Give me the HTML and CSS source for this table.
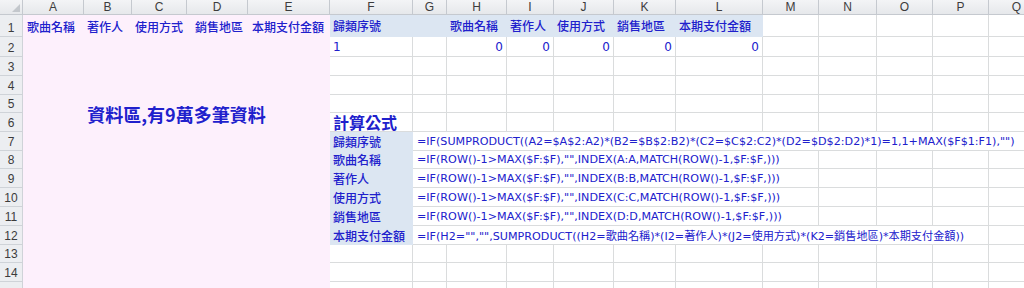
FILE: index.html
```html
<!DOCTYPE html>
<html>
<head>
    <meta charset="utf-8">
    <link rel="stylesheet" href="styles.css">
</head>
<body>
<div class="sheet">
    <!-- data block A:E, no gridlines inside -->
    <div class="data-area"></div>
    <div class="lbl col-a">歌曲名稱</div>
    <div class="lbl col-b">著作人</div>
    <div class="lbl col-c">使用方式</div>
    <div class="lbl col-d">銷售地區</div>
    <div class="lbl col-e">本期支付金額</div>
    <div class="big-note">資料區,有9萬多筆資料</div>

    <!-- column headers -->
    <div class="corner"><span class="tri"></span></div>
    <div class="ch">A</div><div class="ch">B</div><div class="ch">C</div><div class="ch">D</div>
    <div class="ch">E</div><div class="ch">F</div><div class="ch">G</div><div class="ch">H</div>
    <div class="ch">I</div><div class="ch">J</div><div class="ch">K</div><div class="ch">L</div>
    <div class="ch">M</div><div class="ch">N</div><div class="ch">O</div><div class="ch">P</div>
    <div class="ch">Q</div>

    <!-- row 1 -->
    <div class="rh">1</div>
    <div class="c blue bold">歸類序號</div>
    <div class="c blue"></div>
    <div class="c blue bold">歌曲名稱</div>
    <div class="c blue bold">著作人</div>
    <div class="c blue bold">使用方式</div>
    <div class="c blue bold">銷售地區</div>
    <div class="c blue bold">本期支付金額</div>
    <div class="c"></div><div class="c"></div><div class="c"></div><div class="c"></div><div class="c"></div>

    <!-- row 2 -->
    <div class="rh">2</div>
    <div class="c val">1</div>
    <div class="c"></div>
    <div class="c val num">0</div>
    <div class="c val num">0</div>
    <div class="c val num">0</div>
    <div class="c val num">0</div>
    <div class="c val num">0</div>
    <div class="c"></div><div class="c"></div><div class="c"></div><div class="c"></div><div class="c"></div>

    <!-- rows 3-5 -->
    <div class="rh">3</div>
    <div class="c"></div><div class="c"></div><div class="c"></div><div class="c"></div><div class="c"></div><div class="c"></div>
    <div class="c"></div><div class="c"></div><div class="c"></div><div class="c"></div><div class="c"></div><div class="c"></div>
    <div class="rh">4</div>
    <div class="c"></div><div class="c"></div><div class="c"></div><div class="c"></div><div class="c"></div><div class="c"></div>
    <div class="c"></div><div class="c"></div><div class="c"></div><div class="c"></div><div class="c"></div><div class="c"></div>
    <div class="rh">5</div>
    <div class="c"></div><div class="c"></div><div class="c"></div><div class="c"></div><div class="c"></div><div class="c"></div>
    <div class="c"></div><div class="c"></div><div class="c"></div><div class="c"></div><div class="c"></div><div class="c"></div>

    <!-- row 6 -->
    <div class="rh">6</div>
    <div class="c title">計算公式</div>
    <div class="c"></div><div class="c"></div><div class="c"></div><div class="c"></div><div class="c"></div><div class="c"></div>
    <div class="c"></div><div class="c"></div><div class="c"></div><div class="c"></div><div class="c"></div>

    <!-- formulas -->
    <div class="rh">7</div>
    <div class="c blue bold">歸類序號</div>
    <div class="c formula span-11">=IF(SUMPRODUCT((A2=$A$2:A2)*(B2=$B$2:B2)*(C2=$C$2:C2)*(D2=$D$2:D2)*1)=1,1+MAX($F$1:F1),"")</div>

    <div class="rh">8</div>
    <div class="c blue bold">歌曲名稱</div>
    <div class="c formula span-7">=IF(ROW()-1&gt;MAX($F:$F),"",INDEX(A:A,MATCH(ROW()-1,$F:$F,)))</div>
    <div class="c"></div><div class="c"></div><div class="c"></div><div class="c"></div>

    <div class="rh">9</div>
    <div class="c blue bold">著作人</div>
    <div class="c formula span-7">=IF(ROW()-1&gt;MAX($F:$F),"",INDEX(B:B,MATCH(ROW()-1,$F:$F,)))</div>
    <div class="c"></div><div class="c"></div><div class="c"></div><div class="c"></div>

    <div class="rh">10</div>
    <div class="c blue bold">使用方式</div>
    <div class="c formula span-7">=IF(ROW()-1&gt;MAX($F:$F),"",INDEX(C:C,MATCH(ROW()-1,$F:$F,)))</div>
    <div class="c"></div><div class="c"></div><div class="c"></div><div class="c"></div>

    <div class="rh">11</div>
    <div class="c blue bold">銷售地區</div>
    <div class="c formula span-7">=IF(ROW()-1&gt;MAX($F:$F),"",INDEX(D:D,MATCH(ROW()-1,$F:$F,)))</div>
    <div class="c"></div><div class="c"></div><div class="c"></div><div class="c"></div>

    <div class="rh">12</div>
    <div class="c blue bold">本期支付金額</div>
    <div class="c formula span-10">=IF(H2="","",SUMPRODUCT((H2=歌曲名稱)*(I2=著作人)*(J2=使用方式)*(K2=銷售地區)*本期支付金額))</div>
    <div class="c"></div>

    <!-- rows 13-15 -->
    <div class="rh">13</div>
    <div class="c"></div><div class="c"></div><div class="c"></div><div class="c"></div><div class="c"></div><div class="c"></div>
    <div class="c"></div><div class="c"></div><div class="c"></div><div class="c"></div><div class="c"></div><div class="c"></div>
    <div class="rh">14</div>
    <div class="c"></div><div class="c"></div><div class="c"></div><div class="c"></div><div class="c"></div><div class="c"></div>
    <div class="c"></div><div class="c"></div><div class="c"></div><div class="c"></div><div class="c"></div><div class="c"></div>
    <div class="rh"></div>
    <div class="c"></div><div class="c"></div><div class="c"></div><div class="c"></div><div class="c"></div><div class="c"></div>
    <div class="c"></div><div class="c"></div><div class="c"></div><div class="c"></div><div class="c"></div><div class="c"></div>
</div>
</body>
</html>
```

FILE: styles.css
```css
:root {
    --grid-line: #dadcdd;
    --head-line: #c5c9cf;
    --ink: #2020cc;
    --fill-blue: #dce6f2;
    --fill-pink: #fdf0fc;
}

body {
    margin: 0;
    overflow: hidden;
    background: #fff;
    font-family: "DejaVu Sans", "Noto Sans CJK TC", sans-serif;
}

.sheet {
    display: grid;
    grid-template-columns: 23px 61px 48px 55px 61px 82px 83px 34px 60px 47px 60px 62px 87px 56px 58px 56px 56px 56px;
    grid-template-rows: 15px 22px 20px 19px 19px 18px 19px 19px 18px 19px 19px 19px 19px 18px 19px 19px;
    width: 1045px;
}

/* headers */
.corner,
.ch,
.rh {
    background: linear-gradient(#f3f4f6, #e6e8eb);
    border-right: 1px solid var(--head-line);
    border-bottom: 1px solid var(--head-line);
    color: #3c3c3c;
    font-family: "Liberation Sans", Arial, sans-serif;
    font-size: 12px;
    display: flex;
    align-items: center;
    justify-content: center;
}

.corner {
    justify-content: flex-end;
    align-items: flex-end;
    padding: 0 2px 2px 0;
}

.tri {
    width: 0;
    height: 0;
    border-left: 8px solid transparent;
    border-bottom: 8px solid #c3c7cc;
}

.rh {
    background: #eceef1;
    border-color: #cfd3d8;
    align-items: flex-end;
    padding-bottom: 1px;
}

/* cells */
.c {
    border-right: 1px solid var(--grid-line);
    border-bottom: 1px solid var(--grid-line);
    display: flex;
    align-items: center;
    padding: 0 3px;
    white-space: nowrap;
    color: var(--ink);
    font-size: 12px;
    min-width: 0;
}

.blue {
    background: var(--fill-blue);
    border-color: transparent;
}

.bold {
    font-family: "Noto Sans CJK TC", sans-serif;
    font-weight: 500;
    font-size: 12px;
}

.val {
    font-family: "DejaVu Sans", sans-serif;
    font-size: 12px;
}

.num {
    justify-content: flex-end;
}

.title {
    font-family: "Noto Sans CJK TC", sans-serif;
    font-weight: 700;
    font-size: 16px;
}

.formula {
    font-size: 11.15px;
    padding-left: 4px;
}

.span-7 { grid-column: span 7; }
.span-10 { grid-column: span 10; }
.span-11 { grid-column: span 11; }

/* data block */
.data-area {
    grid-column: 2 / 7;
    grid-row: 2 / 17;
    background: var(--fill-pink);
}

.lbl {
    grid-row: 2;
    display: flex;
    align-items: center;
    padding-left: 4px;
    color: var(--ink);
    font-family: "Noto Sans CJK TC", sans-serif;
    font-weight: 500;
    font-size: 12px;
    white-space: nowrap;
}

.col-a { grid-column: 2; }
.col-b { grid-column: 3; padding-left: 3px; }
.col-c { grid-column: 4; padding-left: 3px; }
.col-d { grid-column: 5; padding-left: 8px; }
.col-e { grid-column: 6; }

.big-note {
    grid-column: 2 / 7;
    grid-row: 6 / 8;
    display: flex;
    align-items: center;
    justify-content: center;
    color: var(--ink);
    font-family: "Noto Sans CJK TC", sans-serif;
    font-weight: 700;
    font-size: 18px;
    white-space: nowrap;
}
```
